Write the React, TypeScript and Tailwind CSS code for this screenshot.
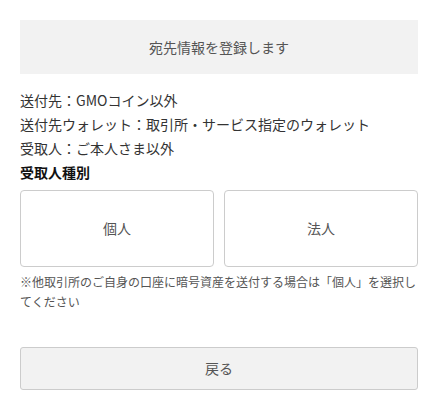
import React from "react";

export default function App() {
  return (
    <div
      className="w-[438px] h-[408px] bg-white px-5 pt-5 text-[#333]"
      style={{ fontFamily: '"Noto Sans CJK JP", "Noto Sans", sans-serif' }}
    >
      <div className="h-[54px] bg-[#f2f2f2] flex items-center justify-center text-[14px] text-[#555]">
        宛先情報を登録します
      </div>
      <div className="mt-[14px] text-[14px] leading-[24px]">
        <p>送付先：GMOコイン以外</p>
        <p>送付先ウォレット：取引所・サービス指定のウォレット</p>
        <p>受取人：ご本人さま以外</p>
        <p className="font-bold text-[#111]">受取人種別</p>
      </div>
      <div className="mt-[6px] grid grid-cols-2 gap-[10px]">
        <button className="h-[77px] border border-[#ccc] rounded-[4px] bg-white text-[14px] text-[#555] flex items-center justify-center">
          個人
        </button>
        <button className="h-[77px] border border-[#ccc] rounded-[4px] bg-white text-[14px] text-[#555] flex items-center justify-center">
          法人
        </button>
      </div>
      <p className="mt-[5px] text-[12px] leading-[20px] text-[#555]">
        ※他取引所のご自身の口座に暗号資産を送付する場合は「個人」を選択してください
      </p>
      <button className="mt-[35px] w-full h-[43px] border border-[#ccc] rounded-[3px] bg-[#f2f2f2] text-[14px] text-[#555] flex items-center justify-center">
        戻る
      </button>
    </div>
  );
}
